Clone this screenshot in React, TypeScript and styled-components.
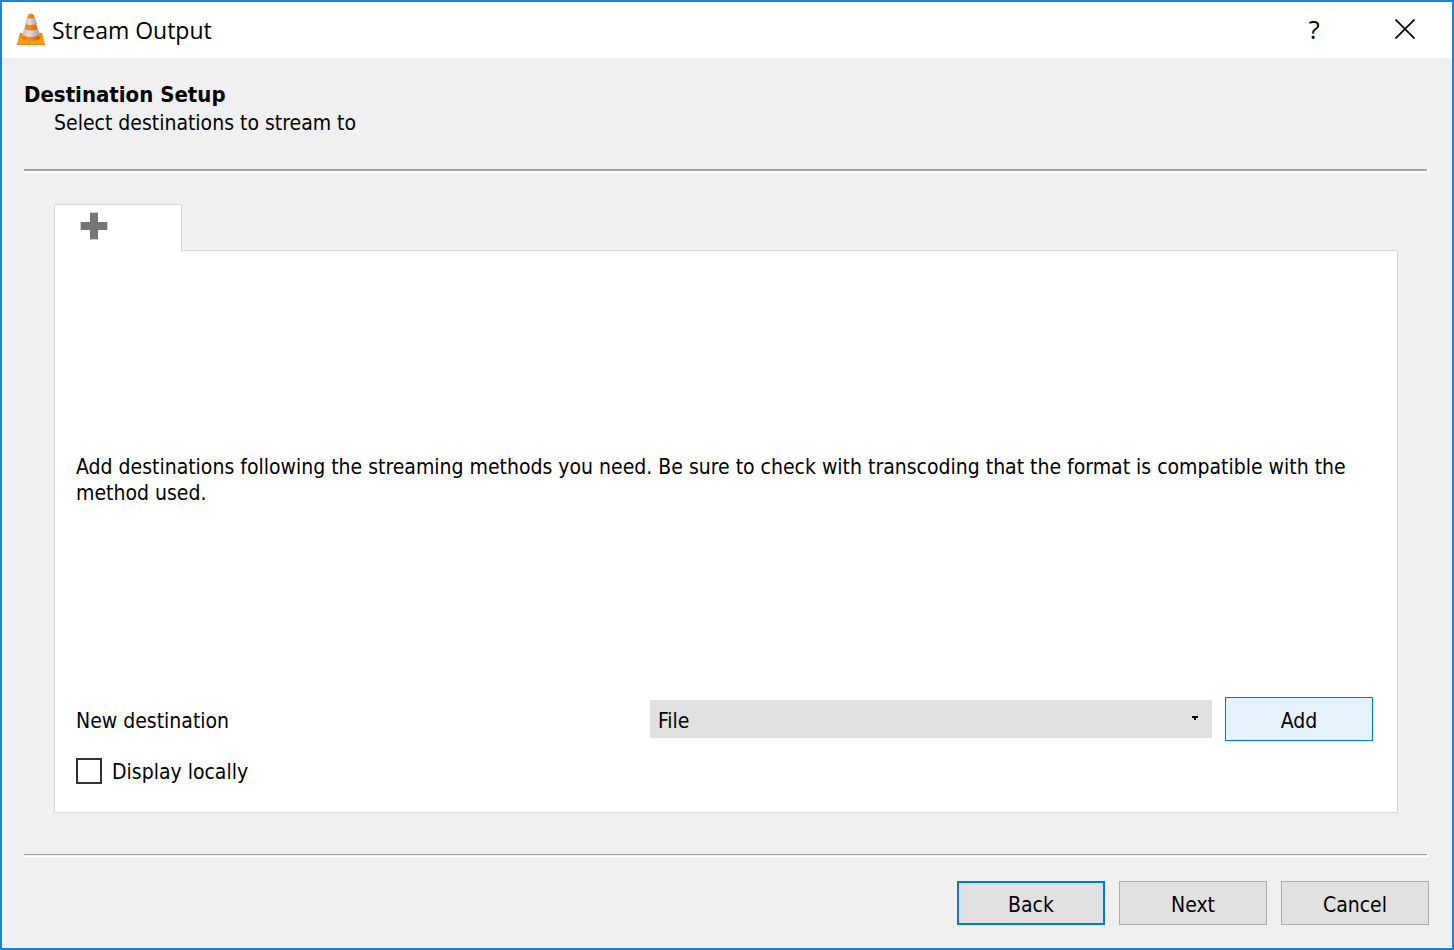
import React from "react";
import styled, { createGlobalStyle, css } from "styled-components";

const GlobalStyle = createGlobalStyle`
  *, *::before, *::after { box-sizing: border-box; }
  body {
    margin: 0;
    background: #f0f0f0;
    color: #000;
    font: 21px/26px "DejaVu Sans Condensed", "Noto Sans", sans-serif;
  }
`;

const Window = styled.div`
  display: flex;
  flex-direction: column;
  min-height: 100vh;
  border: 2px solid #1a82d7;
  background: #f0f0f0;
`;

const TitleBar = styled.header`
  display: flex;
  align-items: center;
  height: 56px;
  padding: 0 33px 2px 15px;
  background: #fff;
`;

const WindowTitle = styled.h1`
  flex: 1;
  margin: 2px 0 0 7px;
  font: 400 23px/32px "Open Sans", sans-serif;
`;

const CaptionButton = styled.button`
  display: flex;
  align-items: center;
  justify-content: center;
  width: 28px;
  height: 32px;
  padding: 0;
  border: 0;
  background: none;
  color: #000;
  font: 500 26px/32px "Open Sans", sans-serif;
`;

const CaptionButtons = styled.div`
  display: flex;
  gap: 63px;
`;

const PageHead = styled.div`
  padding: 23px 23px 32px 22px;
`;

const PageTitle = styled.h2`
  margin: 0;
  font-size: 22px;
  font-weight: 700;
  line-height: 28px;
`;

const PageSubtitle = styled.p`
  margin: 0;
  padding-left: 30px;
  line-height: 28px;
`;

const Rule = styled.hr<{ $thick?: boolean }>`
  flex: none;
  height: ${(p) => (p.$thick ? 2 : 1)}px;
  margin: 0 25px 2px 22px;
  border: 0;
  background: #a0a0a0;
  box-shadow: 0 2px #fff, 2px 0 #fff, 2px 2px #fff;
`;

const Tabs = styled.main`
  display: flex;
  flex: 1;
  flex-direction: column;
  padding: 31px 54px 41px 52px;
`;

const Tab = styled.button`
  display: flex;
  align-items: flex-start;
  z-index: 1;
  width: 128px;
  height: 48px;
  margin-bottom: -2px;
  padding: 7px 0 0 25px;
  border: 1px solid #d9d9d9;
  border-bottom: 0;
  background: #fff;
`;

const Panel = styled.section`
  display: flex;
  flex: 1;
  flex-direction: column;
  padding: 0 24px 28px 21px;
  border: 1px solid #d9d9d9;
  background: #fff;
`;

const Message = styled.p`
  display: flex;
  flex: 1;
  align-items: center;
  margin: 0;
  padding-top: 12px;
`;

const DestinationRow = styled.div`
  display: grid;
  grid-template-columns: minmax(0, 561fr) minmax(0, 562fr) 148px;
  align-items: center;
  column-gap: 13px;
`;

const SelectBox = styled.div`
  display: flex;
  align-items: center;
  height: 38px;
  background: #e1e1e1;
`;

const Select = styled.select`
  flex: 1;
  height: 38px;
  margin-right: -20px;
  padding: 4px 28px 0 8px;
  border: 0;
  appearance: none;
  background: none;
  color: #000;
  font: inherit;
`;

const Arrow = styled.svg`
  margin: 0 14px 2px 0;
  pointer-events: none;
`;

const Button = styled.button<{ $look?: "hover" | "default" }>`
  width: 148px;
  height: 44px;
  padding: 4px 0 0;
  border: 1px solid #adadad;
  background: #e1e1e1;
  color: #000;
  font: inherit;
  ${(p) => p.$look === "hover" && css`
    border-color: #0078d7;
    background: #e5f1fb;
  `}
  ${(p) => p.$look === "default" && css`
    border: 2px solid #0078d7;
  `}
`;

const FieldLabel = styled.label`
  padding-top: 4px;
`;

const CheckLabel = styled.label`
  display: flex;
  align-items: center;
  align-self: flex-start;
  gap: 10px;
  height: 26px;
  margin-top: 17px;
  line-height: 28px;
`;

const Checkbox = styled.input`
  width: 26px;
  height: 26px;
  margin: 0;
  border: 2px solid #333;
  appearance: none;
  background: #fff;
`;

const CheckText = styled.span`
  padding-top: 2px;
`;

const Footer = styled.footer`
  display: flex;
  justify-content: flex-end;
  gap: 14px;
  padding: 24px 23px 23px;
`;

function ConeIcon() {
  return (
    <svg width="28" height="34" viewBox="0 0 28 34" aria-hidden="true">
      <defs>
        <linearGradient id="base" x1="0" y1="0" x2="0" y2="1">
          <stop offset="0" stopColor="#e8820e" />
          <stop offset="1" stopColor="#ffa516" />
        </linearGradient>
        <linearGradient id="orange" x1="0" y1="0" x2="1" y2="0">
          <stop offset="0" stopColor="#e8761a" />
          <stop offset=".4" stopColor="#fb8a1c" />
          <stop offset="1" stopColor="#cf5c08" />
        </linearGradient>
        <linearGradient id="white" x1="0" y1="0" x2="1" y2="0">
          <stop offset="0" stopColor="#bdbdbd" />
          <stop offset=".4" stopColor="#e0e0e0" />
          <stop offset="1" stopColor="#9c9c9c" />
        </linearGradient>
      </defs>
      <path d="M3 21h22l3 11H0z" fill="url(#base)" />
      <path d="M0 31h28v2H0z" fill="#f09410" />
      <path d="M11 3q3-3 6 0l6 24q-9 4-18 0z" fill="url(#orange)" />
      <path d="M10 6q4 1 8 0l2 6q-6 2-12 0z" fill="url(#white)" />
      <path d="M7 17q7 3 14 0l2 6q-9 4-18 0z" fill="url(#white)" />
    </svg>
  );
}

export default function App() {
  return (
    <>
      <GlobalStyle />
      <Window>
        <TitleBar>
          <ConeIcon />
          <WindowTitle>Stream Output</WindowTitle>
          <CaptionButtons>
            <CaptionButton type="button" aria-label="Help">?</CaptionButton>
            <CaptionButton type="button" aria-label="Close">
              <svg width="20" height="20" viewBox="0 0 20 20" fill="none" stroke="#000" strokeWidth="1.7">
                <path d="M.5.5l19 19M19.5.5l-19 19" />
              </svg>
            </CaptionButton>
          </CaptionButtons>
        </TitleBar>
        <PageHead>
          <PageTitle>Destination Setup</PageTitle>
          <PageSubtitle>Select destinations to stream to</PageSubtitle>
        </PageHead>
        <Rule $thick />
        <Tabs>
          <Tab type="button" role="tab" aria-selected="true" aria-label="New destination tab">
            <svg width="28" height="28" viewBox="0 0 28 28">
              <path d="M10 0h8v28h-8zM0 10h28v8H0z" fill="#d0d0d0" />
              <path d="M10 1h8v9h9v8h-9v9h-8v-9H1v-8h9z" fill="#757575" />
            </svg>
          </Tab>
          <Panel>
            <Message>
              Add destinations following the streaming methods you need. Be sure to check with
              transcoding that the format is compatible with the method used.
            </Message>
            <DestinationRow>
              <FieldLabel htmlFor="destination">New destination</FieldLabel>
              <SelectBox>
                <Select id="destination" defaultValue="File">
                  <option>File</option>
                </Select>
                <Arrow width="6" height="4" viewBox="0 0 6 4">
                  <path d="M0 0h6v2H4v2H2V2H0z" />
                </Arrow>
              </SelectBox>
              <Button type="button" $look="hover">Add</Button>
            </DestinationRow>
            <CheckLabel>
              <Checkbox type="checkbox" />
              <CheckText>Display locally</CheckText>
            </CheckLabel>
          </Panel>
        </Tabs>
        <Rule />
        <Footer>
          <Button type="button" $look="default">Back</Button>
          <Button type="button">Next</Button>
          <Button type="button">Cancel</Button>
        </Footer>
      </Window>
    </>
  );
}
